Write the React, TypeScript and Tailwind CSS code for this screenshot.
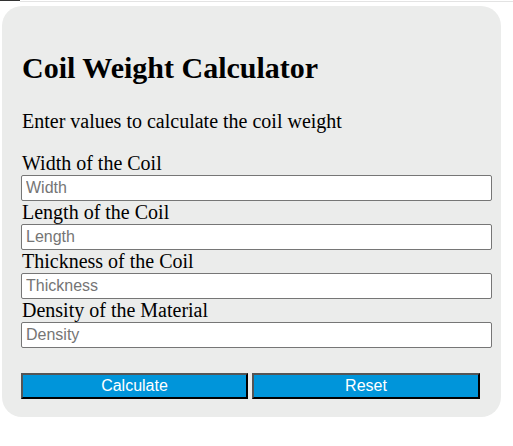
import React from 'react';

const fields = [
  { label: 'Width of the Coil', placeholder: 'Width' },
  { label: 'Length of the Coil', placeholder: 'Length' },
  { label: 'Thickness of the Coil', placeholder: 'Thickness' },
  { label: 'Density of the Material', placeholder: 'Density' },
];

const App: React.FC = () => {
  return (
    <div className="w-[513px] h-[446px] bg-white font-['Liberation_Serif',serif] text-black">
      <div className="flex h-[2px]">
        <div className="w-[20px] h-[1px] bg-[#333]" />
        <div className="flex-1 h-[2px] border-b border-[#e3e3e3]" />
      </div>
      <div className="ml-[2px] mt-[4px] w-[499px] h-[411px] rounded-[20px] bg-[#ebeceb] px-[20px] pt-[30px]">
        <h1 className="text-[30px] font-bold leading-[34px] mt-[15px]">Coil Weight Calculator</h1>
        <p className="text-[20px] leading-[23px] mt-[25px]">Enter values to calculate the coil weight</p>
        <div className="mt-[19px] flex flex-col">
          {fields.map((f) => (
            <div key={f.label} className="flex flex-col">
              <label className="text-[20px] leading-[23px]">{f.label}</label>
              <input
                type="text"
                placeholder={f.placeholder}
                className="w-[471px] h-[26px] -ml-px bg-white border border-[#767676] rounded-[2px] px-[4px] font-['Liberation_Sans',sans-serif] text-[16px] placeholder:text-[#757575] outline-none"
              />
            </div>
          ))}
        </div>
        <div className="mt-[25px] flex gap-[4px] -ml-px">
          <button className="w-[227px] h-[26px] bg-[#0095da] border-2 border-t-[#555] border-l-[#555] border-b-black border-r-black text-white font-['Liberation_Sans',sans-serif] text-[16px] leading-none">
            Calculate
          </button>
          <button className="w-[228px] h-[26px] bg-[#0095da] border-2 border-t-[#555] border-l-[#555] border-b-black border-r-black text-white font-['Liberation_Sans',sans-serif] text-[16px] leading-none">
            Reset
          </button>
        </div>
      </div>
    </div>
  );
};

export default App;
